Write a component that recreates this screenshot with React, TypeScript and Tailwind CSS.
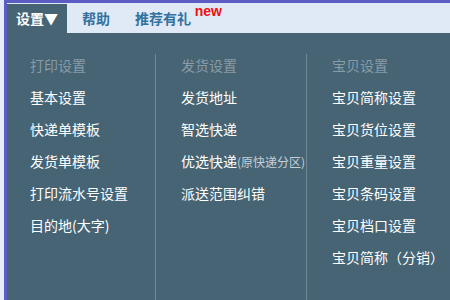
const columns = [
  {
    title: '打印设置',
    items: ['基本设置', '快递单模板', '发货单模板', '打印流水号设置', '目的地(大字)'],
  },
  {
    title: '发货设置',
    items: ['发货地址', '智选快递', '优选快递', '派送范围纠错'],
  },
  {
    title: '宝贝设置',
    items: ['宝贝简称设置', '宝贝货位设置', '宝贝重量设置', '宝贝条码设置', '宝贝档口设置', '宝贝简称（分销）'],
  },
]

export default function App() {
  return (
    <div
      className="flex h-[300px] w-[450px] overflow-hidden bg-[#e4ecf5]"
      style={{ fontFamily: '"Microsoft YaHei", "Noto Sans CJK SC", sans-serif' }}
    >
      <div className="ml-[4px] flex flex-1 flex-col border-l-[3px] border-t-[3px] border-[#5b5cc4]">
        {/* Tabs */}
        <div className="flex h-[30px] items-stretch bg-[#dfeaf6] pt-[1px]">
          <div className="flex w-[60px] items-center justify-center bg-[#466474] text-[14px] font-bold text-white">
            设置▼
          </div>
          <div className="flex items-center pl-[15px] text-[14px] font-bold text-[#33719f]">帮助</div>
          <div className="relative flex items-center pl-[25px] text-[14px] font-bold text-[#33719f]">
            推荐有礼
            <span
              className="absolute right-[-31px] top-[-3px] text-[14px] font-bold text-[#f01010]"
              style={{ fontFamily: '"Liberation Sans", Arial, sans-serif' }}
            >
              new
            </span>
          </div>
        </div>

        {/* Panel */}
        <div className="flex flex-1 bg-[#466474] pt-[16px]">
          {columns.map((col, i) => (
            <div
              key={col.title}
              className={i === 0 ? 'relative w-[148px] pl-[23px]' : 'relative w-[151px] pl-[26px]'}
            >
              {i > 0 && <div className="absolute bottom-0 left-0 top-[5px] w-px bg-[#6f8895]" />}
              <div className="h-[32px] leading-[32px] text-[14px] text-[#8a9ba6]">{col.title}</div>
              {col.items.map((item) => (
                <div key={item} className="h-[32px] whitespace-nowrap leading-[32px] text-[14px] text-white">
                  {item}
                  {item === '优选快递' && (
                    <span className="text-[12px] text-[#c4d0d8]">(原快递分区)</span>
                  )}
                </div>
              ))}
            </div>
          ))}
        </div>
      </div>
    </div>
  )
}
